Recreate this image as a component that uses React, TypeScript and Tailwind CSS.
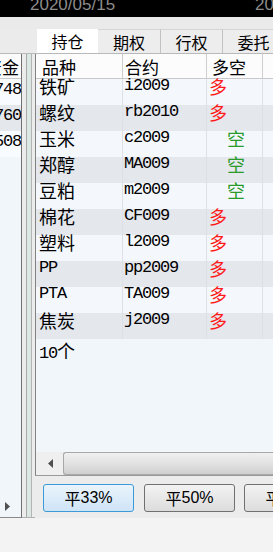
import React from "react";

const rows = [
  { n: "铁矿", c: "i2009", d: "多" },
  { n: "螺纹", c: "rb2010", d: "多" },
  { n: "玉米", c: "c2009", d: "空" },
  { n: "郑醇", c: "MA009", d: "空" },
  { n: "豆粕", c: "m2009", d: "空" },
  { n: "棉花", c: "CF009", d: "多" },
  { n: "塑料", c: "l2009", d: "多" },
  { n: "PP", c: "pp2009", d: "多" },
  { n: "PTA", c: "TA009", d: "多" },
  { n: "焦炭", c: "j2009", d: "多" },
];

const leftVals = ["748", "760", "508"];

const cjk = "font-['Noto_Sans_CJK_SC',sans-serif]";
const mono = "font-['Liberation_Mono',monospace] text-[17px] tracking-[-1.2px]";

function Tab({ label, active, first }: { label: string; active?: boolean; first?: boolean }) {
  return (
    <div
      className={
        "h-full flex items-center justify-center shrink-0 text-[16px] leading-[24px] text-black " +
        cjk +
        " " +
        (active
          ? "w-[61px] bg-white"
          : "w-[62px] bg-[#ededed] border-t border-[#d6d6d6] " + (first ? "" : "border-l border-l-[#c2c2c2]"))
      }
    >
      {label}
    </div>
  );
}

export default function App() {
  return (
    <div className="w-[273px] h-[552px] overflow-hidden bg-[#f3f3f3] flex flex-col">
      {/* black top bar */}
      <div className="h-[17px] shrink-0 bg-black overflow-hidden flex whitespace-nowrap">
        <span className="shrink-0 ml-[30px] -mt-[4px] text-[17px] leading-[17px] text-[#8c8c8c] font-['Liberation_Sans',sans-serif]">
          2020/05/15
        </span>
        <span className="shrink-0 ml-[140px] -mt-[4px] text-[17px] leading-[17px] text-[#8c8c8c] font-['Liberation_Sans',sans-serif]">
          2020/05/15
        </span>
      </div>
      {/* gray band */}
      <div className="h-[12px] shrink-0 bg-[#eaeaea]" />
      {/* tabs */}
      <div className="h-[24px] shrink-0 flex bg-[#ebebeb] overflow-hidden">
        <div className="w-[37px] shrink-0" />
        <Tab label="持仓" active />
        <Tab label="期权" first />
        <Tab label="行权" />
        <Tab label="委托" />
      </div>
      {/* main area */}
      <div className="h-[465px] shrink-0 flex bg-[#ececec] border-t border-[#b9b9b9]">
        {/* left panel */}
        <div className="w-[22px] shrink-0 flex flex-col bg-[#f1f6fb] border-r border-[#707070] border-b border-b-[#8a8a8a] overflow-hidden">
          <div className="h-[25px] shrink-0 bg-[#fbfbfb] border-b border-[#c9c9c9] flex justify-end overflow-hidden whitespace-nowrap">
            <span className={"shrink-0 pr-[2px] text-[17px] leading-[25px] text-black " + cjk}>资金</span>
          </div>
          {leftVals.map((v, i) => (
            <div
              key={v}
              className={
                "h-[26px] shrink-0 flex justify-end items-start overflow-hidden whitespace-nowrap " +
                (i % 2 === 1 ? "bg-[#e4e7ec]" : "bg-[#f8fbff]")
              }
            >
              <span className={"shrink-0 leading-[22px] text-black " + mono}>{v}</span>
            </div>
          ))}
          <div className="flex-1" />
          <div className="h-[21px] shrink-0 flex items-center pl-[5px]">
            <svg width="6" height="9" viewBox="0 0 6 9">
              <polygon points="0,0 5,4.5 0,9" fill="#505050" />
            </svg>
          </div>
        </div>
        {/* splitter */}
        <div className="w-[13px] shrink-0 flex border-b border-[#b0b0b0]">
          <div className="w-[4px] shrink-0" />
          <div className="w-[1px] shrink-0 bg-[#a9a9a9]" />
          <div className="w-[4px] shrink-0 bg-[#dbe7e2]" />
          <div className="w-[1px] shrink-0 bg-[#b4b4b4]" />
        </div>
        {/* right panel */}
        <div className="flex-1 min-w-0 flex flex-col">
          <div className="h-[422px] shrink-0 flex flex-col border-l border-[#828282] border-b border-b-[#9a9a9a] bg-[#f1f6fb] overflow-hidden">
            {/* header */}
            <div className="h-[25px] shrink-0 flex bg-[#fcfcfc] border-b border-[#c8c8c8] whitespace-nowrap">
              <div className={"w-[87px] shrink-0 border-r border-[#cfcfcf] pl-[6px] text-[17px] leading-[25px] " + cjk}>品种</div>
              <div className={"w-[84px] shrink-0 border-r border-[#cfcfcf] pl-[2px] text-[17px] leading-[25px] " + cjk}>合约</div>
              <div className={"w-[56px] shrink-0 border-r border-[#cfcfcf] pl-[5px] text-[17px] leading-[25px] " + cjk}>多空</div>
              <div className="flex-1" />
            </div>
            {rows.map((r, i) => (
              <div
                key={r.c}
                className={
                  "h-[26px] shrink-0 flex items-baseline whitespace-nowrap " +
                  (i % 2 === 1 ? "bg-[#e4e7ec]" : "bg-[#f4f8fd]")
                }
              >
                <div
                  className={
                    "w-[87px] self-stretch shrink-0 border-r border-[#dde1e6] pl-[3px] leading-[14px] text-black " +
                    (/^[A-Z]+$/.test(r.n) ? mono : "text-[18px] " + cjk)
                  }
                >
                  {r.n}
                </div>
                <div className={"w-[84px] self-stretch shrink-0 border-r border-[#dde1e6] pl-[1px] leading-[14px] text-black " + mono}>
                  {r.c}
                </div>
                <div
                  className={
                    "w-[56px] self-stretch shrink-0 border-r border-[#dde1e6] text-[18px] leading-[14px] " +
                    cjk +
                    " " +
                    (r.d === "多" ? "pl-[2px] text-[#ff1a1a]" : "pl-[20px] text-[#2a9a2a]")
                  }
                >
                  {r.d}
                </div>
                <div className="flex-1" />
              </div>
            ))}
            <div className="h-[26px] shrink-0 flex items-start pl-[3px] whitespace-nowrap">
              <span className="leading-[22px] text-black">
                <span className={mono}>10</span>
                <span className={"text-[18px] " + cjk}>个</span>
              </span>
            </div>
            <div className="flex-1" />
            {/* horizontal scrollbar */}
            <div className="h-[23px] shrink-0 flex bg-[#e8e8e8]">
              <div className="w-[27px] shrink-0 flex items-center justify-center bg-[#efefef]">
                <svg width="6" height="9" viewBox="0 0 6 9">
                  <polygon points="6,0 1,4.5 6,9" fill="#505050" />
                </svg>
              </div>
              <div className="flex-1 rounded-l-[3px] border border-r-0 border-[#a8a8a8] bg-gradient-to-b from-[#f0f0f0] via-[#e2e2e2] to-[#cfcfcf]" />
            </div>
          </div>
          {/* buttons */}
          <div className="flex-1 flex items-start pt-[8px] pl-[8px] gap-[10px] overflow-hidden whitespace-nowrap">
            <button className="w-[91px] h-[28px] shrink-0 rounded-[3px] border border-[#3c9ad8] bg-gradient-to-b from-[#eaf4fc] to-[#cfe4f6] flex items-center justify-center text-black text-[16px]">
              <span className={cjk}>平</span>
              <span className="font-['Liberation_Sans',sans-serif]">33%</span>
            </button>
            <button className="w-[91px] h-[28px] shrink-0 rounded-[3px] border border-[#707070] bg-gradient-to-b from-[#f3f3f3] to-[#dcdcdc] flex items-center justify-center text-black text-[16px]">
              <span className={cjk}>平</span>
              <span className="font-['Liberation_Sans',sans-serif]">50%</span>
            </button>
            <button className="w-[91px] h-[28px] shrink-0 -ml-[1px] rounded-[3px] border border-[#707070] bg-gradient-to-b from-[#f3f3f3] to-[#dcdcdc] flex items-center justify-center text-black text-[16px]">
              <span className={cjk}>平</span>
              <span className="font-['Liberation_Sans',sans-serif]">全部</span>
            </button>
          </div>
        </div>
      </div>
      <div className="flex-1 bg-[#f3f3f3]" />
    </div>
  );
}
